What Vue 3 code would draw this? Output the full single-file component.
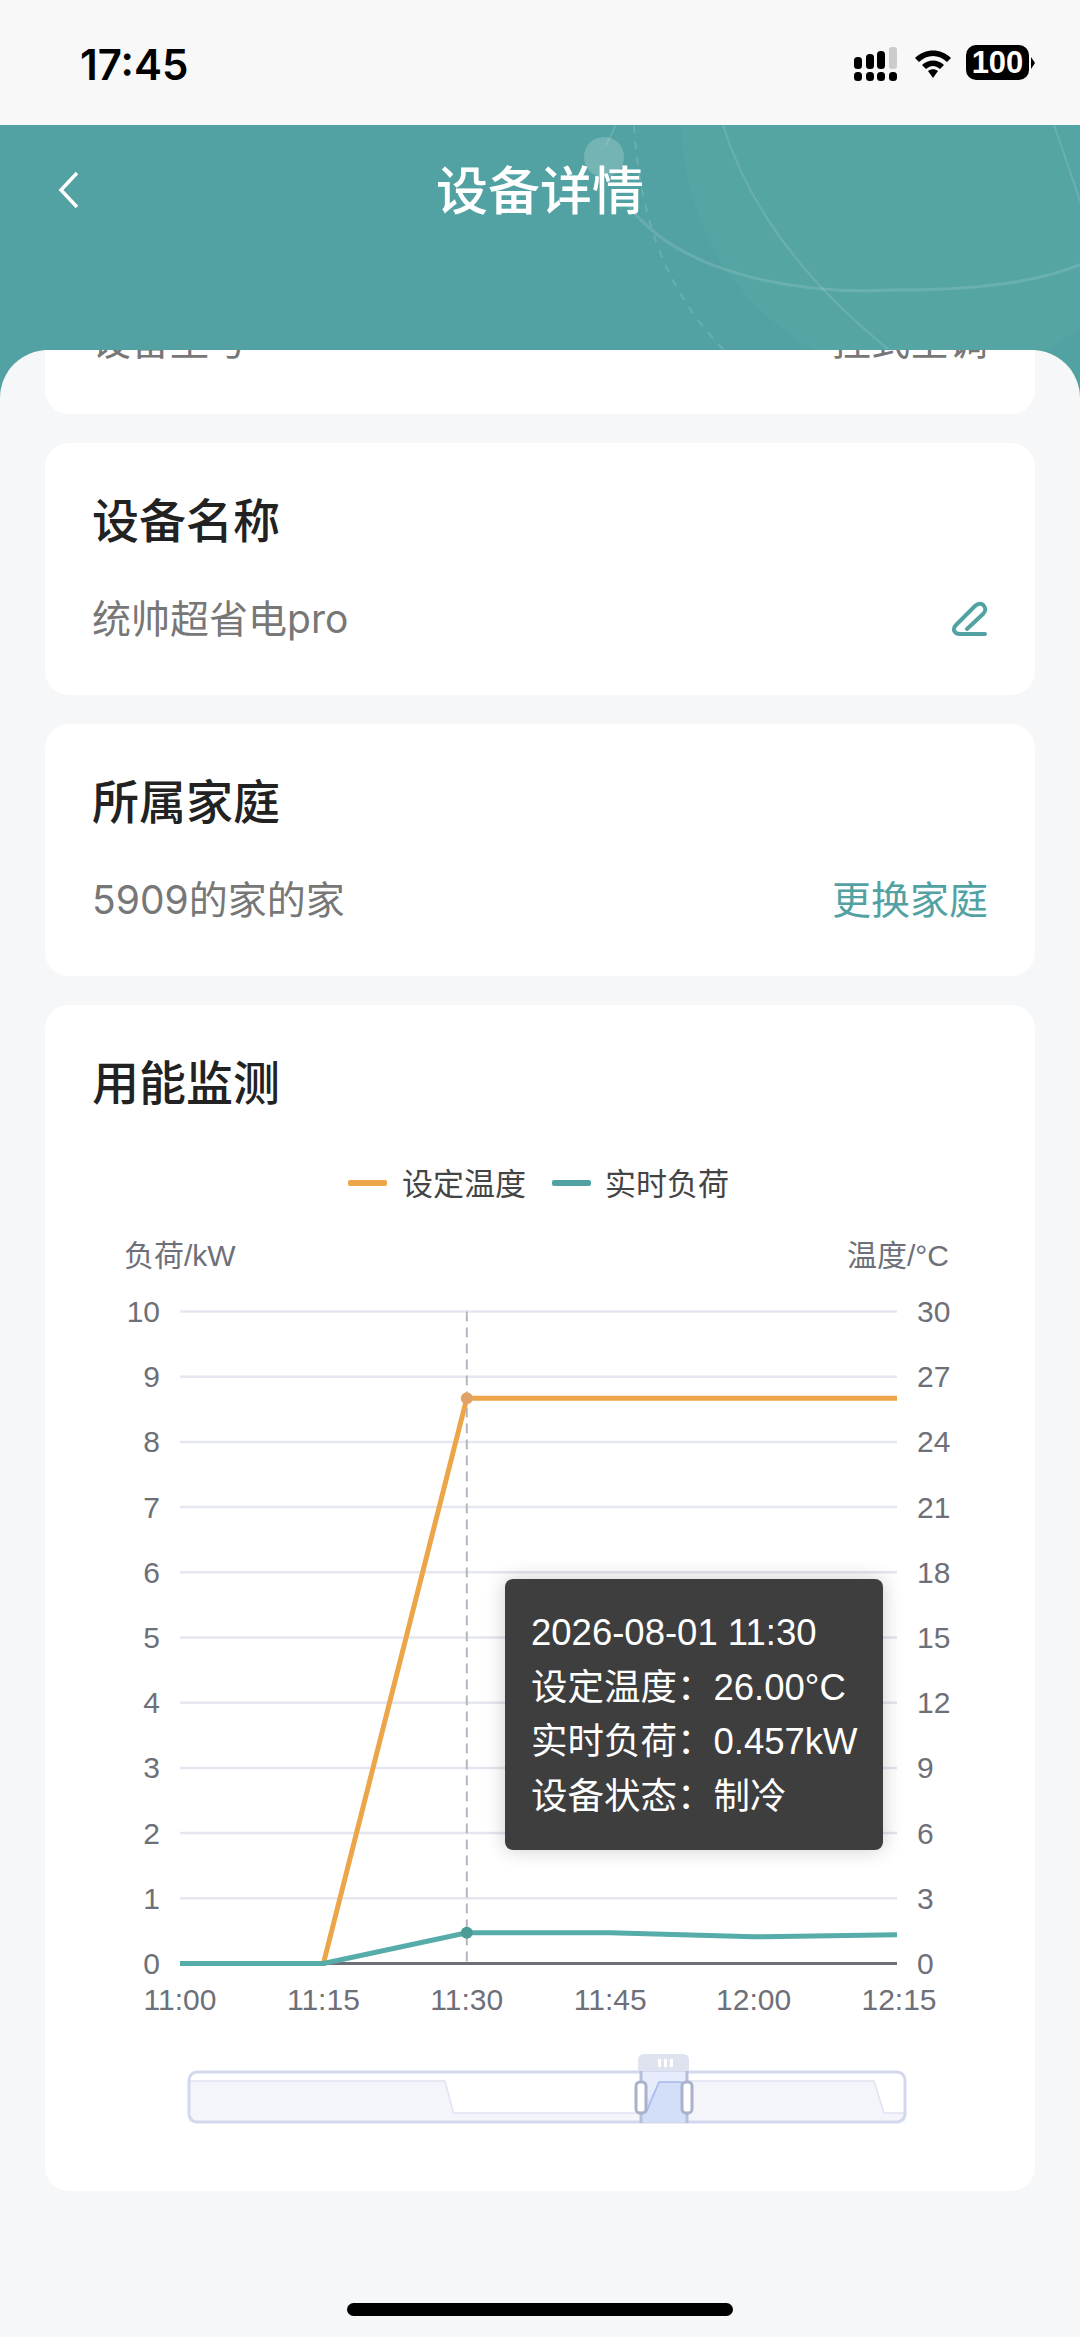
<script setup>
// chart geometry, local to the .chart box
const left = 135
const right = 852
const top = 171.5
const bottom = 823.5
const stepX = (right - left) / 5

const loadTicks = [10, 9, 8, 7, 6, 5, 4, 3, 2, 1, 0]
const times = ['11:00', '11:15', '11:30', '11:45', '12:00', '12:15']

const toY = (load) => bottom - ((bottom - top) * load) / 10
const toPoints = (list) => list.map((v, i) => `${left + stepX * i},${toY(v)}`).join(' ')

const tempLine = toPoints([0, 0, 8.67, 8.67, 8.67, 8.67])
const loadLine = toPoints([0, 0, 0.47, 0.47, 0.41, 0.44])

const tipLines = ['2026-08-01 11:30', '设定温度：26.00°C', '实时负荷：0.457kW', '设备状态：制冷']
</script>

<template>
  <div class="page">
    <div class="status">
      <span class="time">17:45</span>
      <div class="status-icons">
        <svg width="44" height="36" viewBox="0 0 44 36">
          <g fill="#000">
            <rect x="0" y="12" width="8" height="12" rx="3.5" />
            <rect x="12" y="9" width="8" height="15" rx="3.5" />
            <rect x="23" y="6" width="8" height="18" rx="3.5" />
            <rect x="0" y="27" width="8" height="9" rx="3.5" />
            <rect x="12" y="27" width="8" height="9" rx="3.5" />
            <rect x="23" y="27" width="8" height="9" rx="3.5" />
            <rect x="35" y="27" width="8" height="9" rx="3.5" />
          </g>
          <rect x="35" y="2" width="8" height="22" rx="3" fill="#cccccc" />
        </svg>
        <svg class="wifi" width="40" height="32" viewBox="2 0 36 32">
          <path d="M2 11 C12 1 28 1 38 11 L34 15 C26 7 14 7 6 15 Z" fill="#000" />
          <path d="M9 18 C15 12 25 12 31 18 L27 22 C22 18 18 18 13 22 Z" fill="#000" />
          <path d="M15 24 C18 21.5 22 21.5 25 24 L20 31 Z" fill="#000" />
        </svg>
        <div class="battery">
          <span class="battery-body">100</span>
          <span class="battery-cap"></span>
        </div>
      </div>
    </div>

    <div class="header">
      <svg class="header-deco" width="1080" height="273" viewBox="0 0 1080 273">
        <ellipse cx="930" cy="0" rx="248" ry="254" fill="#56a5a5" />
        <g fill="none" stroke="#ffffff">
          <path d="M628 80 C680 150 800 170 895 165 C960 165 1040 160 1090 135" stroke-opacity="0.12" stroke-width="3" />
          <path d="M723 0 Q760 120 888 224" stroke-opacity="0.12" stroke-width="2" />
          <path d="M634 0 C640 100 670 170 723 224" stroke-opacity="0.13" stroke-width="2" stroke-dasharray="8 8" />
          <path d="M1054 0 L1085 90" stroke-opacity="0.12" stroke-width="2" />
          <path d="M616 0 L606 20" stroke-opacity="0.12" stroke-width="2" />
        </g>
        <circle cx="604" cy="32" r="20" fill="#ffffff" fill-opacity="0.2" />
      </svg>
      <div class="nav">
        <svg class="back" width="24" height="38" viewBox="0 0 24 38">
          <path d="M20 2 L4 19 L20 36" fill="none" stroke="#fff" stroke-width="3.5" />
        </svg>
        <h1 class="title">设备详情</h1>
      </div>
    </div>

    <div class="sheet">
      <div class="card card-clipped">
        <div class="row">
          <span class="value">设备型号</span>
          <span class="value">挂式空调</span>
        </div>
      </div>

      <div class="card">
        <h2 class="card-title">设备名称</h2>
        <div class="row">
          <span class="value">统帅超省电pro</span>
          <svg class="edit" width="40" height="40" viewBox="0 0 40 40">
            <path d="M36 33 H11 C5 33 3 28 7 24 L26 5 C29 2 33 2 35 5 C37 8 37 10 34 13 L18 28" fill="none" stroke="#53a2a3" stroke-width="4" stroke-linecap="round" />
          </svg>
        </div>
      </div>

      <div class="card">
        <h2 class="card-title">所属家庭</h2>
        <div class="row">
          <span class="value">5909的家的家</span>
          <span class="link">更换家庭</span>
        </div>
      </div>

      <div class="card card-chart">
        <h2 class="card-title">用能监测</h2>
        <div class="chart">
          <svg width="990" height="1000" viewBox="0 0 990 1000">
            <!-- legend -->
            <rect x="303" y="40" width="39" height="6" rx="2" fill="#eda54a" />
            <text class="legend" x="357" y="44">设定温度</text>
            <rect x="507" y="40" width="39" height="6" rx="2" fill="#53a2a3" />
            <text class="legend" x="560" y="44">实时负荷</text>

            <text class="axis" x="79" y="115">负荷/kW</text>
            <text class="axis" x="904" y="115" text-anchor="end">温度/°C</text>

            <g v-for="n in loadTicks" :key="n">
              <line v-if="n > 0" :x1="left" :x2="right" :y1="toY(n)" :y2="toY(n)" stroke="#e4e6f0" stroke-width="2.5" />
              <text class="axis" x="115" :y="toY(n)" text-anchor="end">{{ n }}</text>
              <text class="axis" x="872" :y="toY(n)">{{ n * 3 }}</text>
            </g>

            <line :x1="left" :x2="right" :y1="bottom" :y2="bottom" stroke="#6e7079" stroke-width="3" />
            <text v-for="(t, i) in times" :key="t" class="axis" :x="left + stepX * i + (i === 5 ? 2 : 0)" y="859" text-anchor="middle">{{ t }}</text>

            <line :x1="left + stepX * 2" :x2="left + stepX * 2" :y1="top" :y2="bottom" stroke="#b4b7c0" stroke-width="2" stroke-dasharray="10 6" />

            <polyline :points="tempLine" fill="none" stroke="#eda54a" stroke-width="5" />
            <polyline :points="loadLine" fill="none" stroke="#55aca8" stroke-width="5" />
            <circle :cx="left + stepX * 2" :cy="toY(8.67)" r="6" fill="#e0a266" />
            <circle :cx="left + stepX * 2" :cy="toY(0.47)" r="6" fill="#4b9c98" />

            <!-- data zoom -->
            <path d="M144 941 H400 L408.5 973 H860 V982 H144 Z" fill="#f3f5fb" />
            <path d="M642 941 H829 L839 973 H642 Z" fill="#f3f5fb" />
            <path d="M144 941 H400 L408.5 973 H595" fill="none" stroke="#dfe4f2" stroke-width="1.5" />
            <path d="M642 941 H829 L839 973 H860" fill="none" stroke="#dfe4f2" stroke-width="1.5" />
            <rect x="144" y="932" width="716" height="50" rx="8" fill="none" stroke="#d3d8ee" stroke-width="3" />
            <rect x="596" y="932" width="46" height="50" fill="#e6ecfb" />
            <path d="M596 973 L614 942 H642 V982 H596 Z" fill="#d3dff8" />
            <path d="M601 973 L614 942 H637" fill="none" stroke="#a7b9ee" stroke-width="1.5" />
            <line x1="596" x2="596" y1="931" y2="983" stroke="#b5bfd8" stroke-width="3" />
            <line x1="642" x2="642" y1="931" y2="983" stroke="#b5bfd8" stroke-width="3" />
            <path d="M593 931 V920 Q593 914 599 914 H638 Q644 914 644 920 V931 Z" fill="#dfe3ef" />
            <rect x="613" y="919" width="3" height="8" fill="#fff" />
            <rect x="619" y="919" width="3" height="8" fill="#fff" />
            <rect x="625" y="919" width="3" height="8" fill="#fff" />
            <rect x="591" y="942" width="10" height="31" rx="4" fill="#fff" stroke="#aab2cb" stroke-width="3" />
            <rect x="637" y="942" width="10" height="31" rx="4" fill="#fff" stroke="#aab2cb" stroke-width="3" />
          </svg>

          <div class="tooltip">
            <div v-for="line in tipLines" :key="line" class="tip-line">{{ line }}</div>
          </div>
        </div>
      </div>
    </div>

    <div class="home-bar"></div>
  </div>
</template>

<style>
body {
  margin: 0;
  background: #f6f7f9;
}
</style>

<style scoped>
.page {
  position: relative;
  width: 1080px;
  height: 2337px;
  display: flex;
  flex-direction: column;
  overflow: hidden;
  background: #f6f7f9;
  font-family: Inter, "Noto Sans CJK SC", sans-serif;
}

.status {
  height: 125px;
  flex: none;
  box-sizing: border-box;
  padding: 0 45px 0 80px;
  display: flex;
  align-items: center;
  justify-content: space-between;
  background: #f8f8f8;
}

.time {
  font-family: Inter, sans-serif;
  font-size: 42px;
  font-weight: 600;
  line-height: 48px;
  margin-top: 4px;
  color: #000;
}

.status-icons {
  display: flex;
  align-items: center;
  gap: 15px;
}

.wifi {
  margin-right: -2px;
}

.battery {
  display: flex;
  align-items: center;
  gap: 2px;
}

.battery-body {
  width: 63px;
  height: 35px;
  border-radius: 10px;
  background: #000;
  color: #fff;
  font-family: "Liberation Sans", sans-serif;
  font-size: 31px;
  font-weight: 700;
  line-height: 35px;
  text-align: center;
}

.battery-cap {
  width: 0;
  height: 0;
  border-top: 6px solid transparent;
  border-bottom: 6px solid transparent;
  border-left: 4px solid #000;
}

.header {
  position: relative;
  height: 273px;
  flex: none;
  overflow: hidden;
  background: #53a2a3;
}

.header-deco {
  position: absolute;
  left: 0;
  top: 0;
}

.nav {
  position: relative;
  height: 70px;
  margin-top: 27px;
  display: flex;
  align-items: center;
  justify-content: center;
}

.back {
  position: absolute;
  left: 57px;
  top: 19px;
}

.title {
  margin: 0;
  font-size: 52px;
  font-weight: 500;
  color: #fff;
}

.sheet {
  position: relative;
  flex: 1;
  margin-top: -48px;
  box-sizing: border-box;
  padding: 0 45px;
  display: flex;
  flex-direction: column;
  gap: 29px;
  overflow: hidden;
  border-radius: 48px 48px 0 0;
  background: #f6f7f9;
}

.card {
  flex: none;
  box-sizing: border-box;
  height: 252px;
  padding: 50px 47px 0;
  border-radius: 24px;
  background: #fff;
}

.card-clipped {
  height: 96px;
  margin-top: -32px;
  padding: 0 47px;
}

.card-chart {
  height: 1186px;
  padding: 0;
}

.card-chart .card-title {
  margin-bottom: 29px;
  padding: 50px 47px 0;
}

.card-title {
  margin: 0 0 47px;
  font-size: 47px;
  font-weight: 500;
  line-height: 56px;
  color: #222;
}

.row {
  height: 40px;
  display: flex;
  align-items: center;
  justify-content: space-between;
}

.value {
  font-size: 39px;
  color: #777;
}

.link {
  font-size: 39px;
  color: #53a2a3;
}

.edit {
  margin: 10px -1px 0 0;
}

.chart {
  position: relative;
  height: 1000px;
}

.chart svg {
  display: block;
}

.legend {
  font-family: "Liberation Sans", "Noto Sans CJK SC", sans-serif;
  font-size: 31px;
  fill: #444;
  dominant-baseline: central;
}

.axis {
  font-family: "Liberation Sans", "Noto Sans CJK SC", sans-serif;
  font-size: 30px;
  fill: #6e7079;
  dominant-baseline: central;
}

.tooltip {
  position: absolute;
  left: 460px;
  top: 439px;
  width: 378px;
  height: 271px;
  box-sizing: border-box;
  padding: 27px 0 0 26px;
  border-radius: 8px;
  background: rgba(50, 50, 50, 0.94);
  box-shadow: 0 0 20px rgba(0, 0, 0, 0.2);
  font-family: "Liberation Sans", "Noto Sans CJK SC", sans-serif;
  font-size: 36.5px;
  line-height: 54.5px;
  color: #fff;
  white-space: nowrap;
}

.home-bar {
  position: absolute;
  left: 347px;
  top: 2303px;
  width: 386px;
  height: 13px;
  border-radius: 7px;
  background: #000;
}
</style>
